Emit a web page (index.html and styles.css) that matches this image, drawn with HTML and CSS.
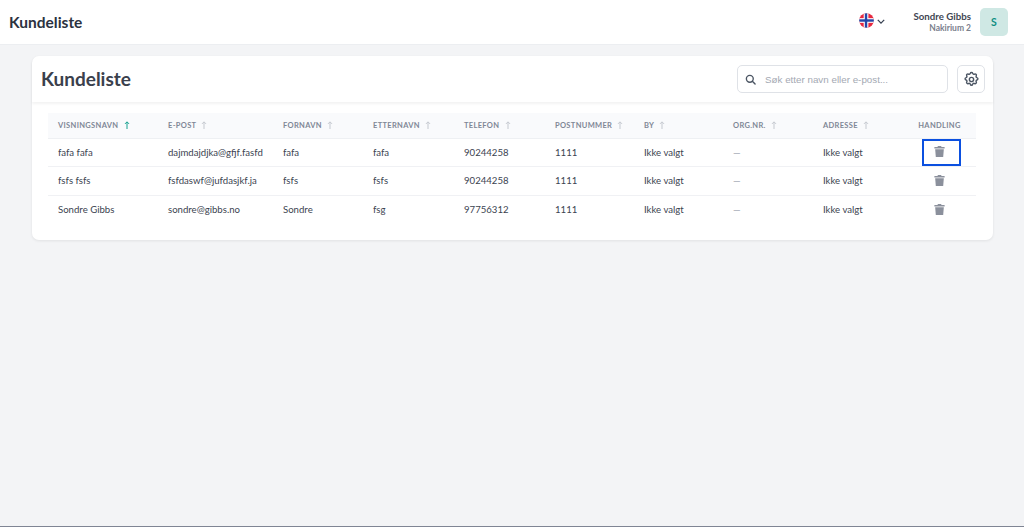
FILE: index.html
```html
<!DOCTYPE html>
<html lang="no">
<head>
<meta charset="utf-8">
<title>Kundeliste</title>
<link rel="stylesheet" href="styles.css">
</head>
<body>
<svg class="defs" width="0" height="0" aria-hidden="true"><defs>
  <symbol id="up" viewBox="0 0 6 8"><path d="M3 8V1M1 2.9L3 .8 5 2.9" fill="none" stroke="currentColor" stroke-width="1"/></symbol>
  <symbol id="trash" viewBox="0 0 14 14"><path d="M5 0h4l.6 1.4H13.5v1.8H.5V1.4h3.9zM1.5 4.2h11l-.8 9.8H2.3z" fill="#8b909c"/></symbol>
</defs></svg>
<header class="topbar">
  <h1 class="topbar-title">Kundeliste</h1>
  <div class="topbar-right">
    <div class="lang">
      <svg class="flag" viewBox="0 0 16 16" width="15" height="15"><defs><clipPath id="c"><circle cx="8" cy="8" r="7.8"/></clipPath></defs><g clip-path="url(#c)"><rect width="16" height="16" fill="#e8283f"/><rect x="5" width="5" height="16" fill="#fff"/><rect y="5.5" width="16" height="5" fill="#fff"/><rect x="6.2" width="2.6" height="16" fill="#2446a8"/><rect y="6.7" width="16" height="2.6" fill="#2446a8"/></g></svg>
      <svg class="chev" viewBox="0 0 10 6" width="8" height="5"><path d="M1 1l4 4 4-4" fill="none" stroke="#374151" stroke-width="1.6"/></svg>
    </div>
    <div class="user">
      <div class="user-name">Sondre Gibbs</div>
      <div class="user-org">Nakirium 2</div>
    </div>
    <div class="avatar">S</div>
  </div>
</header>
<main class="main">
  <section class="card">
    <div class="card-head">
      <h2 class="card-title">Kundeliste</h2>
      <div class="tools">
        <label class="search">
          <svg viewBox="0 0 24 24" width="11" height="11"><circle cx="10.5" cy="10.5" r="7.5" fill="none" stroke="#4b5563" stroke-width="3"/><path d="M16 16l6 6" stroke="#4b5563" stroke-width="3" stroke-linecap="round"/></svg>
          <input class="search-input" type="text" placeholder="Søk etter navn eller e-post...">
        </label>
        <button class="gear" type="button" aria-label="Innstillinger">
          <svg viewBox="0 0 24 24" width="17" height="17" fill="none" stroke="#4b5563" stroke-width="2" stroke-linejoin="round"><path d="M10.3 3.3c.4-1.7 3-1.7 3.4 0a1.7 1.7 0 0 0 2.6 1.1c1.5-.9 3.3.8 2.4 2.4a1.7 1.7 0 0 0 1 2.5c1.8.4 1.8 3 0 3.4a1.7 1.7 0 0 0-1 2.6c.9 1.5-.9 3.3-2.4 2.4a1.7 1.7 0 0 0-2.6 1c-.4 1.8-3 1.8-3.4 0a1.7 1.7 0 0 0-2.6-1c-1.5.9-3.3-.9-2.4-2.4a1.7 1.7 0 0 0-1-2.6c-1.8-.4-1.8-3 0-3.4a1.7 1.7 0 0 0 1-2.5c-.9-1.6.9-3.3 2.4-2.4a1.7 1.7 0 0 0 2.6-1.1z"/><circle cx="12" cy="12" r="3"/></svg>
        </button>
      </div>
    </div>
    <div class="table-wrap">
      <table class="table">
        <colgroup>
          <col class="c1"><col class="c2"><col class="c3"><col class="c4"><col class="c5"><col class="c6"><col class="c7"><col class="c8"><col class="c9"><col class="c10">
        </colgroup>
        <thead>
          <tr>
            <th>VISNINGSNAVN <svg class="sort active"><use href="#up"/></svg></th>
            <th>E-POST <svg class="sort"><use href="#up"/></svg></th>
            <th>FORNAVN <svg class="sort"><use href="#up"/></svg></th>
            <th>ETTERNAVN <svg class="sort"><use href="#up"/></svg></th>
            <th>TELEFON <svg class="sort"><use href="#up"/></svg></th>
            <th>POSTNUMMER <svg class="sort"><use href="#up"/></svg></th>
            <th>BY <svg class="sort"><use href="#up"/></svg></th>
            <th>ORG.NR. <svg class="sort"><use href="#up"/></svg></th>
            <th>ADRESSE <svg class="sort"><use href="#up"/></svg></th>
            <th class="center">HANDLING</th>
          </tr>
        </thead>
        <tbody>
          <tr>
            <td>fafa fafa</td><td>dajmdajdjka@gfjf.fasfd</td><td>fafa</td><td>fafa</td><td>90244258</td><td>1111</td><td>Ikke valgt</td><td class="dash">—</td><td>Ikke valgt</td>
            <td class="center"><button class="del focus" type="button" aria-label="Slett"><svg class="trash"><use href="#trash"/></svg></button></td>
          </tr>
          <tr>
            <td>fsfs fsfs</td><td>fsfdaswf@jufdasjkf.ja</td><td>fsfs</td><td>fsfs</td><td>90244258</td><td>1111</td><td>Ikke valgt</td><td class="dash">—</td><td>Ikke valgt</td>
            <td class="center"><button class="del" type="button" aria-label="Slett"><svg class="trash"><use href="#trash"/></svg></button></td>
          </tr>
          <tr>
            <td>Sondre Gibbs</td><td>sondre@gibbs.no</td><td>Sondre</td><td>fsg</td><td>97756312</td><td>1111</td><td>Ikke valgt</td><td class="dash">—</td><td>Ikke valgt</td>
            <td class="center"><button class="del" type="button" aria-label="Slett"><svg class="trash"><use href="#trash"/></svg></button></td>
          </tr>
        </tbody>
      </table>
    </div>
  </section>
</main>
</body>
</html>
```
FILE: styles.css
```css
* { box-sizing: border-box; }
html, body { height: 100%; }
.defs { position: absolute; }
body {
  margin: 0;
  height: 527px;
  overflow: hidden;
  display: flex;
  flex-direction: column;
  background: #f3f4f6;
  border-bottom: 1px solid #7f8594;
  font-family: "Lato", "Noto Sans", sans-serif;
  color: #374151;
}
.topbar {
  height: 45px;
  flex: none;
  background: #fff;
  border-bottom: 1px solid #eceef1;
  display: flex;
  align-items: center;
  justify-content: space-between;
  padding: 0 16px 0 9px;
}
.topbar-title { margin: 0; font-size: 15.5px; font-weight: 700; color: #2b3240; }
.topbar-right { display: flex; align-items: center; }
.lang { display: flex; align-items: center; gap: 3px; margin: 0 28px 3px 0; }
.flag { display: block; }
.chev { display: block; margin-top: 2px; }
.user { text-align: right; margin-right: 9px; }
.user-name { font-size: 9.7px; font-weight: 700; line-height: 13px; color: #3f4653; }
.user-org { font-size: 8.5px; font-weight: 700; line-height: 11px; color: #7a808c; }
.avatar {
  width: 28px;
  height: 28px;
  border-radius: 5px;
  background: #cfe8e4;
  color: #0f8f82;
  font-size: 10.5px;
  font-weight: 700;
  display: flex;
  align-items: center;
  justify-content: center;
}
.main { flex: 1; padding: 11px 31px 0 32px; }
.card {
  background: #fff;
  border-radius: 7px;
  height: 184px;
  box-shadow: 0 1px 3px rgba(0,0,0,.08);
}
.card-head {
  height: 46px;
  display: flex;
  align-items: center;
  justify-content: space-between;
  padding: 0 8px 0 9px;
  box-shadow: 0 2px 3px rgba(0,0,0,.05);
  border-radius: 7px 7px 0 0;
}
.card-title { margin: 0 0 2px; font-size: 19px; font-weight: 700; color: #3a404c; }
.tools { display: flex; align-items: center; gap: 9px; }
.search {
  width: 211px;
  height: 28px;
  border: 1px solid #dfe2e7;
  border-radius: 5px;
  display: flex;
  align-items: center;
  gap: 9px;
  padding-left: 7px;
}
.search-input {
  border: 0;
  outline: 0;
  flex: 1;
  min-width: 0;
  font-family: "Liberation Sans", sans-serif;
  font-size: 9.8px;
  background: transparent;
  padding: 0;
}
.search-input::placeholder { color: #a4a9b3; opacity: 1; }
.gear {
  width: 28px;
  height: 28px;
  border: 1px solid #dfe2e7;
  border-radius: 5px;
  background: #fff;
  padding: 0;
  display: flex;
  align-items: center;
  justify-content: center;
}
.table-wrap { padding: 11px 17px 0 16px; }
.table { width: 928px; table-layout: fixed; border-collapse: collapse; }
.c1 { width: 110px; } .c2 { width: 115px; } .c3 { width: 90px; } .c4 { width: 91px; } .c5 { width: 91px; }
.c6 { width: 89px; } .c7 { width: 89px; } .c8 { width: 90px; } .c9 { width: 90px; } .c10 { width: 73px; }
th {
  height: 25px;
  padding: 0 0 0 10px;
  background: #f9fafc;
  border-bottom: 1px solid #eef0f3;
  text-align: left;
  font-size: 7.5px;
  font-weight: 700;
  letter-spacing: .33px;
  color: #7f8796;
  white-space: nowrap;
}
td {
  height: 28.6px;
  padding: 0 0 0 10px;
  border-bottom: 1px solid #f0f1f4;
  font-size: 9.6px;
  color: #3b4350;
  white-space: nowrap;
}
tbody tr:last-child td { border-bottom: 0; }
th.center, td.center { text-align: center; padding-left: 0; }
.sort { width: 6px; height: 8px; color: #c4c8cf; margin-left: 3px; vertical-align: -1px; }
.sort.active { color: #14a08f; }
.dash { color: #9ca3af; }
.trash { width: 11px; height: 11px; }
.del {
  width: 37px;
  height: 25px;
  margin-left: 3px;
  border: 0;
  background: transparent;
  padding: 0 3px 1px 0;
  display: inline-flex;
  align-items: center;
  justify-content: center;
  vertical-align: middle;
}
.del.focus { outline: 2px solid #0b50e0; outline-offset: -1px; }
```
